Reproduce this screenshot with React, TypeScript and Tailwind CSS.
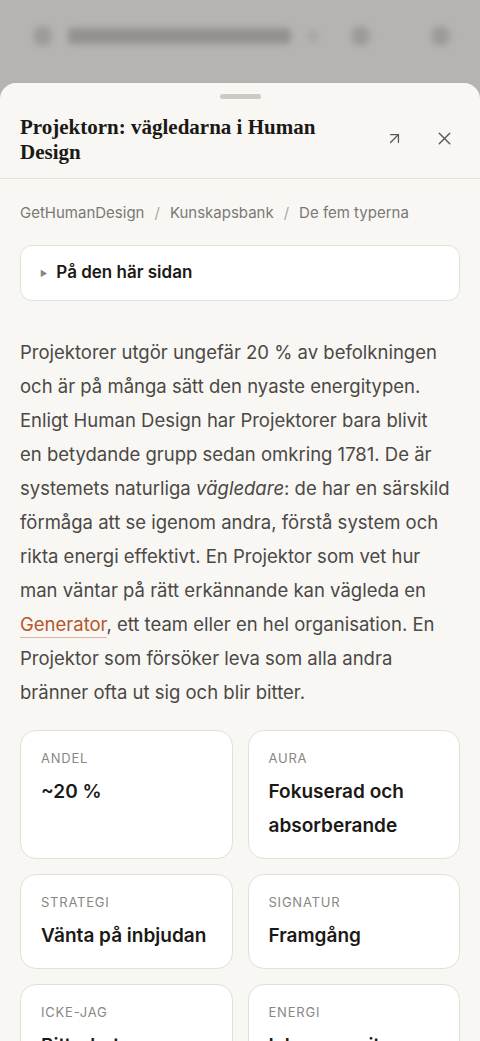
import { ArrowUpRight, X } from "lucide-react";

const FACTS: { label: string; value: string }[] = [
  { label: "Andel", value: "~20 %" },
  { label: "Aura", value: "Fokuserad och absorberande" },
  { label: "Strategi", value: "Vänta på inbjudan" },
  { label: "Signatur", value: "Framgång" },
  { label: "Icke-jag", value: "Bitterhet" },
  { label: "Energi", value: "Icke-energityp" },
];

const sans = "font-['Inter','Noto_Sans',sans-serif]";

export default function App() {
  return (
    <div className={"relative h-[1041px] w-[480px] overflow-hidden bg-[#b5b4b1] " + sans}>
      {/* blurred page behind the sheet */}
      <div className="flex h-[83px] items-center gap-4 pl-[33px] pr-[30px] pb-3 blur-[3px]">
        <span className="h-5 w-5 rounded-full bg-[#9c9b98]" />
        <span className="h-4 w-[232px] rounded bg-[#939290]" />
        <span className="h-3 w-3 rounded-full bg-[#a8a7a4]" />
        <div className="flex-1" />
        <span className="h-5 w-5 rounded-full bg-[#9c9b98]" />
        <span className="ml-[45px] h-5 w-5 rounded-full bg-[#9c9b98]" />
      </div>

      <div className="rounded-t-2xl bg-[#f8f7f4]">
        <div className="flex justify-center pt-[11px]">
          <span className="h-[5px] w-[41px] rounded-full bg-[#cdcac5]" />
        </div>

        <div className="flex items-start justify-between border-b border-[#e4e1dc] pt-4 pb-[13px] pl-5 pr-[25px]">
          <h1 className="max-w-[320px] font-['Liberation_Serif',serif] text-[21px] font-bold leading-[25px] text-[#1b1916]">
            Projektorn: vägledarna i Human Design
          </h1>
          <div className="mt-[13px] flex items-center gap-[30px] text-[#5b5855]">
            <ArrowUpRight className="h-[19px] w-[19px]" strokeWidth={1.6} />
            <X className="h-[21px] w-[21px]" strokeWidth={1.6} />
          </div>
        </div>

        <div className="px-5">
          <nav className="mt-[23px] flex items-center gap-[10px] text-[15px] text-[#7b7874]">
            <span>GetHumanDesign</span>
            <span className="text-[#aaa7a2]">/</span>
            <span>Kunskapsbank</span>
            <span className="text-[#aaa7a2]">/</span>
            <span>De fem typerna</span>
          </nav>

          <div className="mt-5 flex h-[56px] items-center gap-[9px] rounded-xl border border-[#e3e0db] bg-white px-[19px]">
            <span className="text-[8px] text-[#8a8782]">▶</span>
            <span className="text-[17px] font-semibold text-[#1b1916]">På den här sidan</span>
          </div>

          <p className="mt-[34px] pr-[10px] text-[18.5px] leading-[34px] text-[#4b4845]">
            Projektorer utgör ungefär 20 % av befolkningen och är på många sätt den nyaste energitypen.
            Enligt Human Design har Projektorer bara blivit en betydande grupp sedan omkring 1781. De är
            systemets naturliga <em>vägledare</em>: de har en särskild förmåga att se igenom andra, förstå
            system och rikta energi effektivt. En Projektor som vet hur man väntar på rätt erkännande kan
            vägleda en{" "}
            <a className="text-[#b5562a] underline decoration-[#e2b29a] decoration-1 underline-offset-[6px]">
              Generator
            </a>
            , ett team eller en hel organisation. En Projektor som försöker leva som alla andra bränner
            ofta ut sig och blir bitter.
          </p>

          <div className="mt-[21px] grid grid-cols-2 gap-[15px]">
            {FACTS.map((f) => (
              <div
                key={f.label}
                className="rounded-2xl border border-[#e3e0db] bg-white px-5 pt-[18px] pb-[15px]"
              >
                <div className="text-[13px] leading-[18px] tracking-[0.06em] text-[#8a8782] uppercase">
                  {f.label}
                </div>
                <div className="mt-2 text-[19px] font-semibold leading-[34px] text-[#1b1916]">
                  {f.value}
                </div>
              </div>
            ))}
          </div>
        </div>
      </div>
    </div>
  );
}
